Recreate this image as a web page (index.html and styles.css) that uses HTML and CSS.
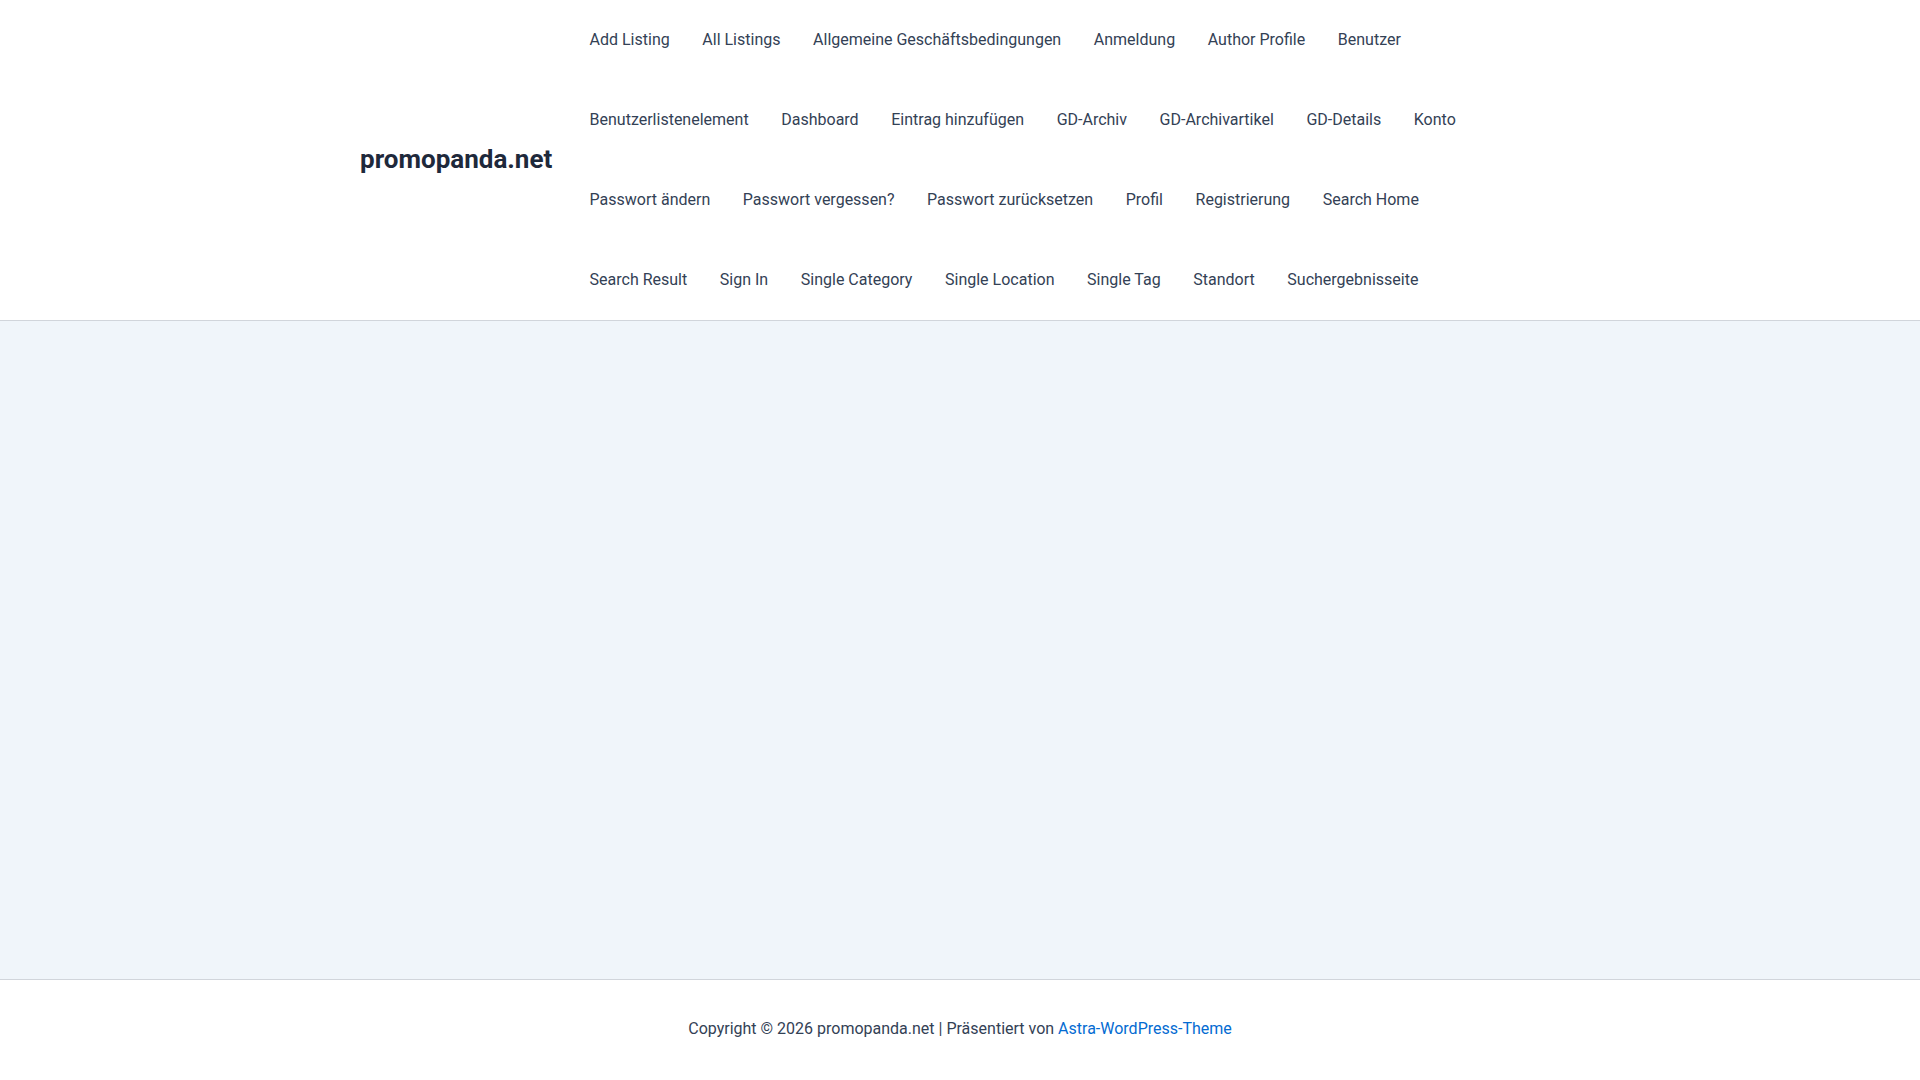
FILE: index.html
```html
<!DOCTYPE html>
<html lang="de">
<head>
<meta charset="utf-8">
<title>promopanda.net</title>
<link rel="stylesheet" href="styles.css">
</head>
<body>
<header class="site-header">
  <div class="header-inner">
    <div class="site-title"><a href="#">promopanda.net</a></div>
    <nav class="main-nav">
      <ul class="menu">
        <li><a href="#">Add Listing</a></li>
        <li><a href="#">All Listings</a></li>
        <li><a href="#">Allgemeine Geschäftsbedingungen</a></li>
        <li><a href="#">Anmeldung</a></li>
        <li><a href="#">Author Profile</a></li>
        <li><a href="#">Benutzer</a></li>
        <li><a href="#">Benutzerlistenelement</a></li>
        <li><a href="#">Dashboard</a></li>
        <li><a href="#">Eintrag hinzufügen</a></li>
        <li><a href="#">GD-Archiv</a></li>
        <li><a href="#">GD-Archivartikel</a></li>
        <li><a href="#">GD-Details</a></li>
        <li><a href="#">Konto</a></li>
        <li><a href="#">Passwort ändern</a></li>
        <li><a href="#">Passwort vergessen?</a></li>
        <li><a href="#">Passwort zurücksetzen</a></li>
        <li><a href="#">Profil</a></li>
        <li><a href="#">Registrierung</a></li>
        <li><a href="#">Search Home</a></li>
        <li><a href="#">Search Result</a></li>
        <li><a href="#">Sign In</a></li>
        <li><a href="#">Single Category</a></li>
        <li><a href="#">Single Location</a></li>
        <li><a href="#">Single Tag</a></li>
        <li><a href="#">Standort</a></li>
        <li><a href="#">Suchergebnisseite</a></li>
      </ul>
    </nav>
  </div>
</header>
<main class="site-content"></main>
<footer class="site-footer">
  <div class="footer-inner">Copyright © 2026 promopanda.net | Präsentiert von <a href="#">Astra-WordPress-Theme</a></div>
</footer>
</body>
</html>
```
FILE: styles.css
```css
* { box-sizing: border-box; }
html, body { margin: 0; padding: 0; }
body {
  font-family: Roboto, "Liberation Sans", sans-serif;
  font-size: 16px;
  color: #334155;
  background: #ffffff;
}
a { text-decoration: none; }

.site-header {
  background: #ffffff;
  border-bottom: 1px solid #d1d5db;
}
.header-inner {
  width: 1200px;
  margin: 0 auto;
  display: flex;
  align-items: center;
}
.site-title {
  font-size: 26px;
  font-weight: 700;
  line-height: 1.2;
  margin-right: 21px;
  flex: 0 0 auto;
}
.site-title a { color: #1e293b; }
.main-nav {
  flex: 0 1 975px;
}
.menu {
  list-style: none;
  margin: 0;
  padding: 0;
  display: flex;
  flex-wrap: wrap;
}
.menu a {
  display: block;
  padding: 0 16.3px;
  line-height: 80px;
  color: #334155;
  font-size: 16px;
}

.site-content {
  background: #f0f5fa;
  height: 658px;
}

.site-footer {
  background: #ffffff;
  border-top: 1px solid #d1d5db;
}
.footer-inner {
  padding: 36px 0 38px;
  line-height: 26px;
  text-align: center;
  color: #334155;
}
.footer-inner a { color: #046bd2; }
```
